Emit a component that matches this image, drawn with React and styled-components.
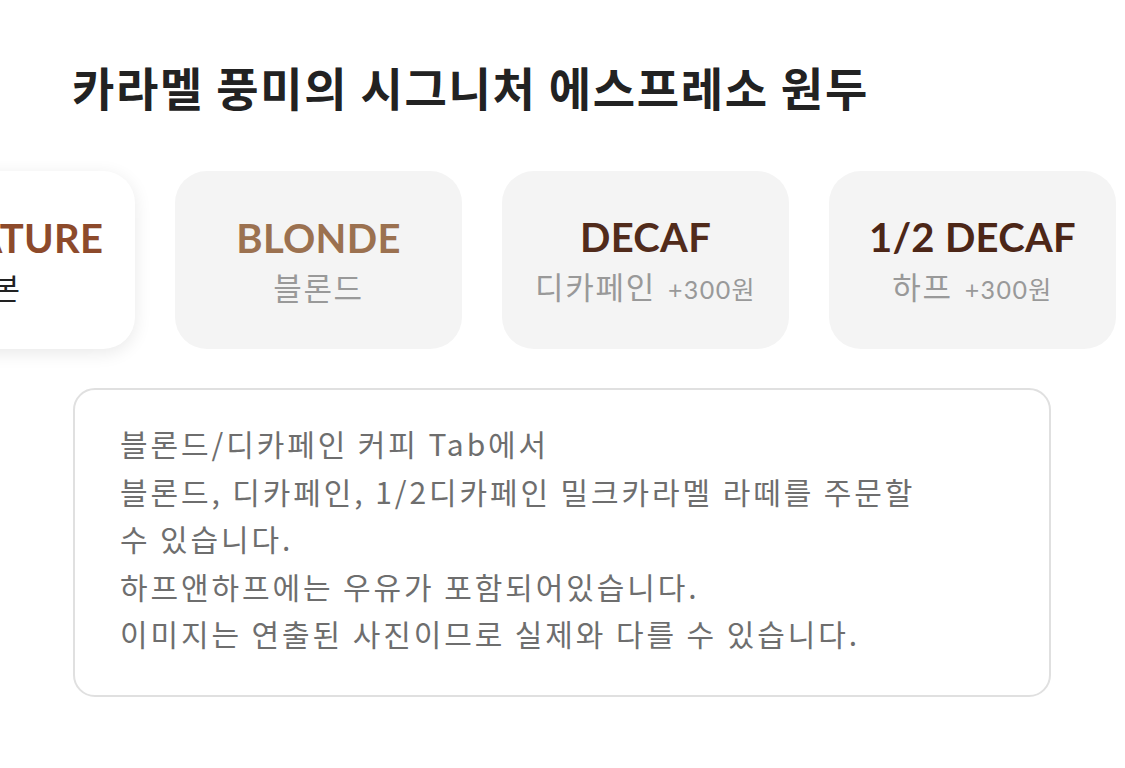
import React from "react";
import styled, { createGlobalStyle } from "styled-components";

const GlobalStyle = createGlobalStyle`
  html, body {
    margin: 0;
    padding: 0;
    background: #ffffff;
  }
  body {
    font-family: "Noto Sans CJK KR", "Noto Sans", sans-serif;
    overflow: hidden;
  }
`;

const beans = [
  { id: "signature", name: "SIGNATURE", label: "기본", color: "#8d4a2b", active: true },
  { id: "blonde", name: "BLONDE", label: "블론드", color: "#9b7150" },
  { id: "decaf", name: "DECAF", label: "디카페인", extra: "+300원", color: "#512b1b" },
  { id: "half", name: "1/2 DECAF", label: "하프", extra: "+300원", color: "#4c2617" },
];

const notice = [
  "블론드/디카페인 커피 Tab에서",
  "블론드, 디카페인, 1/2디카페인 밀크카라멜 라떼를 주문할",
  "수 있습니다.",
  "하프앤하프에는 우유가 포함되어있습니다.",
  "이미지는 연출된 사진이므로 실제와 다를 수 있습니다.",
];

const App = () => {
  return (
    <>
      <GlobalStyle />
      <Page>
        <Title>카라멜 풍미의 시그니처 에스프레소 원두</Title>
        <Carousel>
          <Track>
            {beans.map((bean) => (
              <BeanCard key={bean.id} $active={bean.active}>
                <BeanName $color={bean.color}>{bean.name}</BeanName>
                <BeanLabel $active={bean.active}>
                  {bean.label}
                  {bean.extra && <Extra>{bean.extra}</Extra>}
                </BeanLabel>
              </BeanCard>
            ))}
          </Track>
        </Carousel>
        <NoticeBox>
          {notice.map((line) => (
            <NoticeLine key={line}>{line}</NoticeLine>
          ))}
        </NoticeBox>
      </Page>
    </>
  );
};

const Page = styled.div`
  width: 1125px;
  height: 768px;
  padding-top: 50px;
  box-sizing: border-box;
`;

const Title = styled.h1`
  margin: 0 0 0 72px;
  font-size: 46px;
  line-height: 72px;
  font-weight: 700;
  color: #222222;
  letter-spacing: 1.7px;
`;

const Carousel = styled.div`
  margin-top: 49px;
  overflow: hidden;
  padding: 10px 0 20px;
  margin-bottom: -20px;
  transform: translateY(-10px);
`;

const Track = styled.div`
  display: flex;
  gap: 40px;
  margin-left: -152px;
`;

const BeanCard = styled.div`
  flex: 0 0 287px;
  height: 178px;
  border-radius: 32px;
  box-sizing: border-box;
  display: flex;
  flex-direction: column;
  align-items: center;
  justify-content: center;
  padding-top: 2px;
  background: ${(p) => (p.$active ? "#ffffff" : "#f4f4f4")};
  box-shadow: ${(p) => (p.$active ? "0 4px 18px rgba(0, 0, 0, 0.09)" : "none")};
`;

const BeanName = styled.div`
  font-family: "Lato", "Noto Sans", sans-serif;
  font-weight: 700;
  font-size: 40px;
  line-height: 46px;
  letter-spacing: 0.3px;
  color: ${(p) => p.$color};
`;

const BeanLabel = styled.div`
  display: flex;
  align-items: baseline;
  gap: 12px;
  margin-top: 6px;
  font-size: 31px;
  line-height: 40px;
  letter-spacing: 1.7px;
  color: ${(p) => (p.$active ? "#222222" : "#999999")};
`;

const Extra = styled.span`
  font-family: "Lato", "Noto Sans CJK KR", sans-serif;
  font-size: 25px;
  letter-spacing: 1.4px;
  color: #999999;
`;

const NoticeBox = styled.div`
  margin: 29px 0 0 73px;
  width: 978px;
  height: 309px;
  box-sizing: border-box;
  border: 2px solid #e0e0e0;
  border-radius: 22px;
  padding: 30px 45px 0;
`;

const NoticeLine = styled.div`
  font-size: 30px;
  line-height: 47.5px;
  letter-spacing: 2.9px;
  color: #6e6e6e;
  white-space: nowrap;
`;

export default App;
